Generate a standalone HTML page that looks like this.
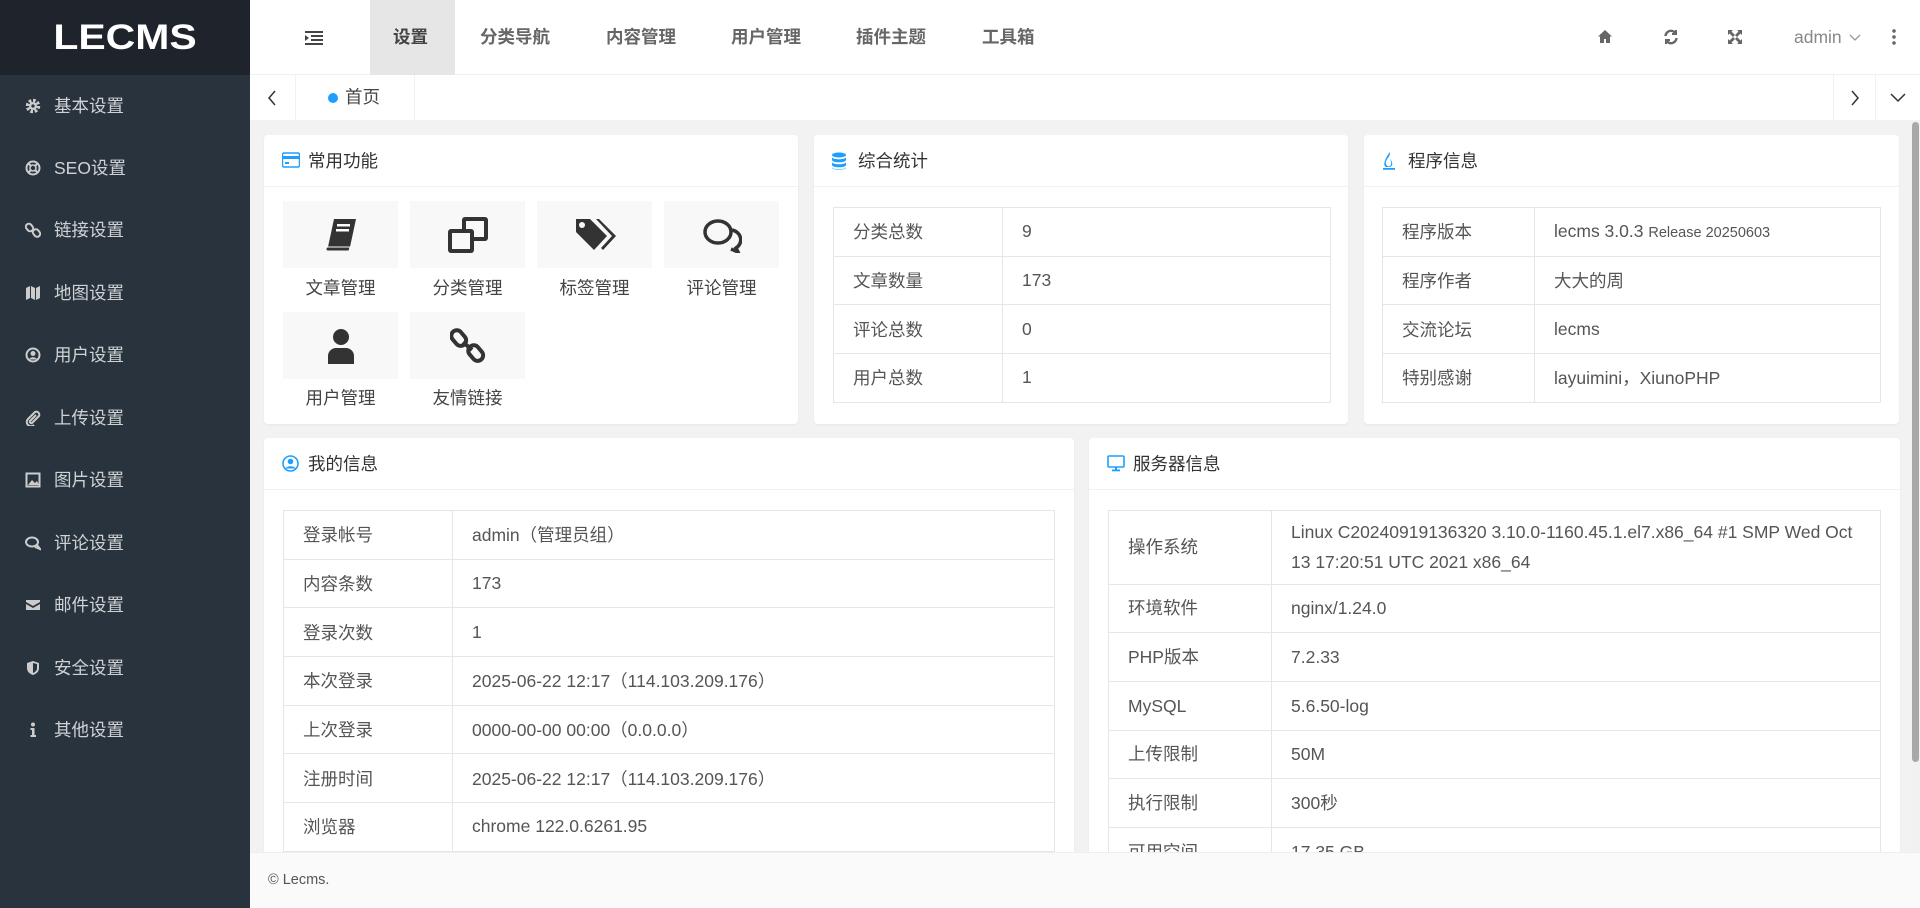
<!DOCTYPE html>
<html><head><meta charset="utf-8"><style>
*{margin:0;padding:0;box-sizing:border-box}
body{width:1920px;height:908px;overflow:hidden;background:#f2f2f2;font-family:"Liberation Sans","Noto Sans CJK SC",sans-serif;color:#333;position:relative}
.a{position:absolute}
#side{left:0;top:0;width:250px;height:908px;background:#28333e}
#logoBg{left:0;top:0;width:250px;height:75px;background:#1f232b}
#logo{left:0;top:0;width:250px;height:75px;color:#fff;font:bold 35px "Liberation Sans",sans-serif;text-align:center;line-height:75px;transform:scaleX(1.17)}
.si{left:0;width:250px;height:62px;line-height:62px;color:rgba(255,255,255,.78);font-size:17.5px}
.si svg{position:absolute;left:25px;top:23px}
.si span{position:absolute;left:54px}
#top{left:250px;top:0;width:1670px;height:75px;background:#fff;border-bottom:1px solid #f0f0f0}
.nv{top:0;height:75px;line-height:75px;font-size:17.5px;font-weight:bold;color:#666}
#tabs{left:250px;top:75px;width:1670px;height:45px;background:#fff}
.card{background:#fff;border-radius:4px;box-shadow:0 1px 2px rgba(0,0,0,.05)}
.ch{height:52px;border-bottom:1px solid #f2f2f2;line-height:52px;font-size:17.5px;padding-left:44px;position:relative;color:#333}
.ch svg{position:absolute;left:18px;top:17px}
table{border-collapse:collapse;position:absolute;font-size:17.5px;color:#555}
td{border:1px solid #e6e6e6;padding:0 19px;vertical-align:middle}
.tile{position:absolute;width:115px;height:67px;background:#f8f8f8;display:flex;align-items:center;justify-content:center}
.lbl{position:absolute;width:115px;text-align:center;font-size:17.5px;color:#444}
</style></head><body>
<div id="side" class="a">
<div id="logoBg" class="a"></div>
<div id="logo" class="a">LECMS</div>
<div class="si a" style="top:75px"><svg width="16" height="16" viewBox="0 0 16 16"><circle cx="8" cy="8" r="5.5" fill="none" stroke="#ccc" stroke-width="3.5" stroke-dasharray="2.6 1.7"/><circle cx="8" cy="8" r="4" fill="#ccc"/><circle cx="8" cy="8" r="1.6" fill="#28333e"/></svg><span>基本设置</span></div>
<div class="si a" style="top:137px"><svg width="16" height="16" viewBox="0 0 16 16"><circle cx="8" cy="8" r="6.5" fill="none" stroke="#ccc" stroke-width="2"/><circle cx="8" cy="8" r="3" fill="none" stroke="#ccc" stroke-width="1.6"/><path d="M3 3l3 3M13 3l-3 3M3 13l3-3M13 13l-3-3" stroke="#ccc" stroke-width="2"/></svg><span>SEO设置</span></div>
<div class="si a" style="top:199px"><svg width="16" height="16" viewBox="0 0 16 16" fill="none" stroke="#ccc" stroke-width="2"><rect x="1.5" y="1.5" width="6" height="8" rx="3" transform="rotate(-40 4.5 5.5)"/><rect x="8.5" y="7" width="6" height="8" rx="3" transform="rotate(-40 11.5 11)"/></svg><span>链接设置</span></div>
<div class="si a" style="top:262px"><svg width="16" height="16" viewBox="0 0 16 16" fill="#ccc"><path d="M1 3l4-2v12l-4 2zM6 1l4 2v12l-4-2zM11 3l4-2v12l-4 2z"/></svg><span>地图设置</span></div>
<div class="si a" style="top:324px"><svg width="16" height="16" viewBox="0 0 16 16"><circle cx="8" cy="8" r="6.5" fill="none" stroke="#ccc" stroke-width="2"/><circle cx="8" cy="6.5" r="2.5" fill="#ccc"/><path d="M4 12.5c1-3 7-3 8 0" fill="#ccc"/></svg><span>用户设置</span></div>
<div class="si a" style="top:387px"><svg width="16" height="16" viewBox="0 0 16 16" fill="none" stroke="#ccc" stroke-width="2"><path d="M11 5L5 11a1.5 1.5 0 0 0 2 2l7-7a3 3 0 0 0-4-4L3 9a4 4 0 0 0 6 6"/></svg><span>上传设置</span></div>
<div class="si a" style="top:449px"><svg width="16" height="16" viewBox="0 0 16 16"><rect x="1.5" y="1.5" width="13" height="13" fill="none" stroke="#ccc" stroke-width="2"/><path d="M3 13l4-5 3 3 2-2 2 4z" fill="#ccc"/></svg><span>图片设置</span></div>
<div class="si a" style="top:512px"><svg width="16" height="16" viewBox="0 0 16 16" fill="none" stroke="#ccc" stroke-width="2"><ellipse cx="7" cy="7" rx="6" ry="4.5"/><path d="M12 10l3 4-5-2"/></svg><span>评论设置</span></div>
<div class="si a" style="top:574px"><svg width="16" height="16" viewBox="0 0 16 16" fill="#ccc"><path d="M1 3h14v2L8 9 1 5zM1 7l7 4 7-4v6H1z"/></svg><span>邮件设置</span></div>
<div class="si a" style="top:637px"><svg width="16" height="16" viewBox="0 0 16 16" fill="#ccc"><path d="M8 1l6 2v5c0 4-3 6-6 7-3-1-6-3-6-7V3zM8 3v10c2-1 4-2 4-5V4z"/></svg><span>安全设置</span></div>
<div class="si a" style="top:699px"><svg width="16" height="16" viewBox="0 0 16 16" fill="#ccc"><circle cx="8" cy="2.5" r="2"/><path d="M5.5 6h4v7h1.5v2h-5.5v-2H7V8H5.5z"/></svg><span>其他设置</span></div>
</div>
<div id="top" class="a">
<svg class="a" style="left:55px;top:30px" width="18" height="16" viewBox="0 0 18 16"><g fill="#444"><rect x="0" y="1" width="18" height="2"/><rect x="6" y="5" width="12" height="2"/><rect x="6" y="9" width="12" height="2"/><rect x="0" y="13" width="18" height="2"/><path d="M0 5l4 3-4 3z"/></g></svg>
<div class="a" style="left:120px;top:0;width:85px;height:75px;background:#e6e6e6"></div>
<div class="nv a" style="left:143px;color:#444">设置</div>
<div class="nv a" style="left:230px">分类导航</div>
<div class="nv a" style="left:356px">内容管理</div>
<div class="nv a" style="left:481px">用户管理</div>
<div class="nv a" style="left:606px">插件主题</div>
<div class="nv a" style="left:732px">工具箱</div>
<svg class="a" style="left:1347px;top:29px" width="16" height="15" viewBox="0 0 16 15"><path d="M8 1L1 7.5h2V14h4v-4h2v4h4V7.5h2z" fill="#666"/></svg>
<svg class="a" style="left:1413px;top:29px" width="16" height="16" viewBox="0 0 16 16" fill="none" stroke="#666" stroke-width="2.4"><path d="M2.5 7A5.5 5.5 0 0 1 13 5M13.5 9A5.5 5.5 0 0 1 3 11"/><path d="M13 1v4H9M3 15v-4h4" stroke-width="2"/></svg>
<svg class="a" style="left:1477px;top:29px" width="16" height="16" viewBox="0 0 16 16" fill="#666"><path d="M1 1h5L4.5 2.5 8 6 6 8 2.5 4.5 1 6zM15 1v5l-1.5-1.5L10 8 8 6l3.5-3.5L10 1zM1 15v-5l1.5 1.5L6 8l2 2-3.5 3.5L6 15zM15 15h-5l1.5-1.5L8 10l2-2 3.5 3.5L15 10z"/></svg>
<div class="a" style="left:1544px;top:0;line-height:75px;font-size:17.5px;color:#888">admin</div>
<svg class="a" style="left:1599px;top:34px" width="12" height="8" viewBox="0 0 12 8"><path d="M1 1l5 5 5-5" fill="none" stroke="#999" stroke-width="1.3"/></svg>
<div class="a" style="left:1642px;top:28px;width:4px;height:18px;background:radial-gradient(circle,#666 1.6px,transparent 2px) 0 0/4px 6px"></div>
</div>
<div id="tabs" class="a">
<div class="a" style="left:45px;top:0;width:1px;height:45px;background:#f0f0f0"></div>
<svg class="a" style="left:17px;top:15px" width="10" height="16" viewBox="0 0 10 16"><path d="M8 1L2 8l6 7" fill="none" stroke="#333" stroke-width="1.5"/></svg>
<div class="a" style="left:164px;top:0;width:1px;height:45px;background:#f0f0f0"></div>
<div class="a" style="left:78px;top:18px;width:10px;height:10px;border-radius:50%;background:#1e9fff"></div>
<div class="a" style="left:95px;top:0;line-height:45px;font-size:17.5px;color:#444">首页</div>
<div class="a" style="left:1583px;top:0;width:1px;height:45px;background:#f0f0f0"></div>
<div class="a" style="left:1625px;top:0;width:1px;height:45px;background:#f0f0f0"></div>
<svg class="a" style="left:1600px;top:15px" width="10" height="16" viewBox="0 0 10 16"><path d="M2 1l6 7-6 7" fill="none" stroke="#333" stroke-width="1.5"/></svg>
<svg class="a" style="left:1640px;top:18px" width="16" height="10" viewBox="0 0 16 10"><path d="M1 1l7 7 7-7" fill="none" stroke="#333" stroke-width="1.5"/></svg>
</div>
<div class="a" style="left:1911px;top:120px;width:9px;height:732px;background:#f1f1f1"><div style="margin:2px 1px;height:640px;background:#a8a8a8;border-radius:4px"></div></div>

<!-- card1 -->
<div class="card a" style="left:264px;top:135px;width:534px;height:289px">
<div class="ch"><svg width="18" height="16" viewBox="0 0 18 16"><rect x="0.5" y="1" width="17" height="14" rx="1.5" fill="#fff" stroke="#1e9fff" stroke-width="1.5"/><rect x="0.5" y="4" width="17" height="3" fill="#1e9fff"/><rect x="3" y="10" width="4" height="2" fill="#1e9fff"/></svg>常用功能</div>
<div class="tile" style="left:19px;top:66px"><svg width="34" height="36" viewBox="0 0 34 36"><path d="M10 2h22l-6 28H4z" fill="#333"/><path d="M4 30h22l-1 4H4a2 2 0 0 1 0-4z" fill="#333" stroke="#f8f8f8" stroke-width="1"/><rect x="13" y="7" width="13" height="2.5" fill="#fff"/><rect x="12" y="12" width="13" height="2.5" fill="#fff"/></svg></div>
<div class="lbl" style="left:19px;top:140px">文章管理</div>
<div class="tile" style="left:146px;top:66px"><svg width="44" height="40" viewBox="0 0 44 40"><rect x="16" y="2" width="26" height="24" rx="3" fill="#333"/><rect x="20" y="6" width="18" height="16" fill="#f8f8f8"/><rect x="2" y="14" width="26" height="24" rx="3" fill="#333"/><rect x="6" y="18" width="18" height="16" fill="#f8f8f8"/></svg></div>
<div class="lbl" style="left:146px;top:140px">分类管理</div>
<div class="tile" style="left:273px;top:66px"><svg width="42" height="38" viewBox="0 0 42 38"><path d="M2 3h14l17 17-13 14L2 16z" fill="#333"/><path d="M22 3h3l17 17-13 14-2-2 11-12z" fill="#333"/><circle cx="8" cy="9" r="3" fill="#f8f8f8"/></svg></div>
<div class="lbl" style="left:273px;top:140px">标签管理</div>
<div class="tile" style="left:400px;top:66px"><svg width="40" height="36" viewBox="0 0 40 36" fill="none" stroke="#333" stroke-width="3.5"><ellipse cx="16" cy="15" rx="13" ry="11"/><path d="M30 13a11 10 0 0 1 4 18l2 4-7-3"/></svg></div>
<div class="lbl" style="left:400px;top:140px">评论管理</div>
<div class="tile" style="left:19px;top:177px"><svg width="30" height="36" viewBox="0 0 30 36"><circle cx="15" cy="9" r="8" fill="#333"/><path d="M2 36v-8a8 8 0 0 1 8-8h10a8 8 0 0 1 8 8v8z" fill="#333"/></svg></div>
<div class="lbl" style="left:19px;top:250px">用户管理</div>
<div class="tile" style="left:146px;top:177px"><svg width="36" height="38" viewBox="0 0 36 38" fill="none" stroke="#333" stroke-width="4"><rect x="3" y="3" width="11" height="17" rx="5.5" transform="rotate(-40 8 11)"/><rect x="20" y="18" width="11" height="17" rx="5.5" transform="rotate(-40 25 26)"/><path d="M13 15l9 8"/></svg></div>
<div class="lbl" style="left:146px;top:250px">友情链接</div>
</div>

<!-- card2 -->
<div class="card a" style="left:814px;top:135px;width:534px;height:289px">
<div class="ch"><svg width="14" height="18" viewBox="0 0 14 18" fill="#1e9fff"><ellipse cx="7" cy="3" rx="7" ry="2.5"/><path d="M0 5c0 3 14 3 14 0v3c0 3-14 3-14 0zM0 10c0 3 14 3 14 0v3c0 3-14 3-14 0zM0 15c0 3 14 3 14 0v0.5c0 3-14 3-14 0z"/></svg>综合统计</div>
<table style="left:19px;top:72px;width:498px"><tr style="height:48.7px"><td style="width:169px">分类总数</td><td>9</td></tr><tr style="height:48.7px"><td>文章数量</td><td>173</td></tr><tr style="height:48.7px"><td>评论总数</td><td>0</td></tr><tr style="height:48.7px"><td>用户总数</td><td>1</td></tr></table>
</div>

<!-- card3 -->
<div class="card a" style="left:1364px;top:135px;width:535px;height:289px">
<div class="ch"><svg width="14" height="18" viewBox="0 0 14 18" fill="#1e9fff"><path d="M8 0C9 5 3 7 4 12c.5 2 3 3 4 2 2-2 1-5 0-7 3 3 3 7 0 8H4C0 13 4 5 8 0z"/><rect x="1" y="16" width="12" height="1.8"/></svg>程序信息</div>
<table style="left:18px;top:72px;width:499px"><tr style="height:48.7px"><td style="width:152px">程序版本</td><td>lecms 3.0.3 <span style="font-size:14.5px">Release 20250603</span></td></tr><tr style="height:48.7px"><td>程序作者</td><td>大大的周</td></tr><tr style="height:48.7px"><td>交流论坛</td><td>lecms</td></tr><tr style="height:48.7px"><td>特别感谢</td><td>layuimini，XiunoPHP</td></tr></table>
</div>

<div class="a" style="left:250px;top:120px;width:1661px;height:732px;overflow:hidden;pointer-events:none">
<!-- card4 -->
<div class="card a" style="left:14px;top:318px;width:810px;height:500px">
<div class="ch"><svg width="17" height="17" viewBox="0 0 17 17"><circle cx="8.5" cy="8.5" r="7.5" fill="none" stroke="#1e9fff" stroke-width="1.6"/><circle cx="8.5" cy="6.5" r="2.8" fill="#1e9fff"/><path d="M3.5 13.5c1-3 9-3 10 0" fill="#1e9fff"/></svg>我的信息</div>
<table style="left:19px;top:72px;width:772px">
<tr style="height:48.7px"><td style="width:169px">登录帐号</td><td>admin（管理员组）</td></tr>
<tr style="height:48.7px"><td>内容条数</td><td>173</td></tr>
<tr style="height:48.7px"><td>登录次数</td><td>1</td></tr>
<tr style="height:48.7px"><td>本次登录</td><td>2025-06-22 12:17（114.103.209.176）</td></tr>
<tr style="height:48.7px"><td>上次登录</td><td>0000-00-00 00:00（0.0.0.0）</td></tr>
<tr style="height:48.7px"><td>注册时间</td><td>2025-06-22 12:17（114.103.209.176）</td></tr>
<tr style="height:48.7px"><td>浏览器</td><td>chrome 122.0.6261.95</td></tr>
<tr style="height:48.7px"><td></td><td></td></tr>
</table>
</div>
<!-- card5 -->
<div class="card a" style="left:839px;top:318px;width:811px;height:500px">
<div class="ch"><svg width="18" height="17" viewBox="0 0 18 17"><rect x="1" y="1" width="16" height="11" rx="1" fill="none" stroke="#1e9fff" stroke-width="1.6"/><rect x="5" y="14.5" width="8" height="1.8" fill="#1e9fff"/><rect x="8" y="12" width="2" height="3" fill="#1e9fff"/></svg>服务器信息</div>
<table style="left:19px;top:72px;width:773px;line-height:30px">
<tr style="height:73.5px"><td style="width:163px">操作系统</td><td style="padding-top:5px;padding-bottom:5px">Linux C20240919136320 3.10.0-1160.45.1.el7.x86_64 #1 SMP Wed Oct 13 17:20:51 UTC 2021 x86_64</td></tr>
<tr style="height:48.7px"><td>环境软件</td><td>nginx/1.24.0</td></tr>
<tr style="height:48.7px"><td>PHP版本</td><td>7.2.33</td></tr>
<tr style="height:48.7px"><td>MySQL</td><td>5.6.50-log</td></tr>
<tr style="height:48.7px"><td>上传限制</td><td>50M</td></tr>
<tr style="height:48.7px"><td>执行限制</td><td>300秒</td></tr>
<tr style="height:48.7px"><td>可用空间</td><td>17.35 GB</td></tr>
</table>
</div>
</div>

<div class="a" style="left:250px;top:852px;width:1670px;height:56px;background:#fafafa;border-top:1px solid #eee;line-height:54px;padding-left:18px;font-size:14.5px;color:#555">© Lecms.</div>
</body></html>
